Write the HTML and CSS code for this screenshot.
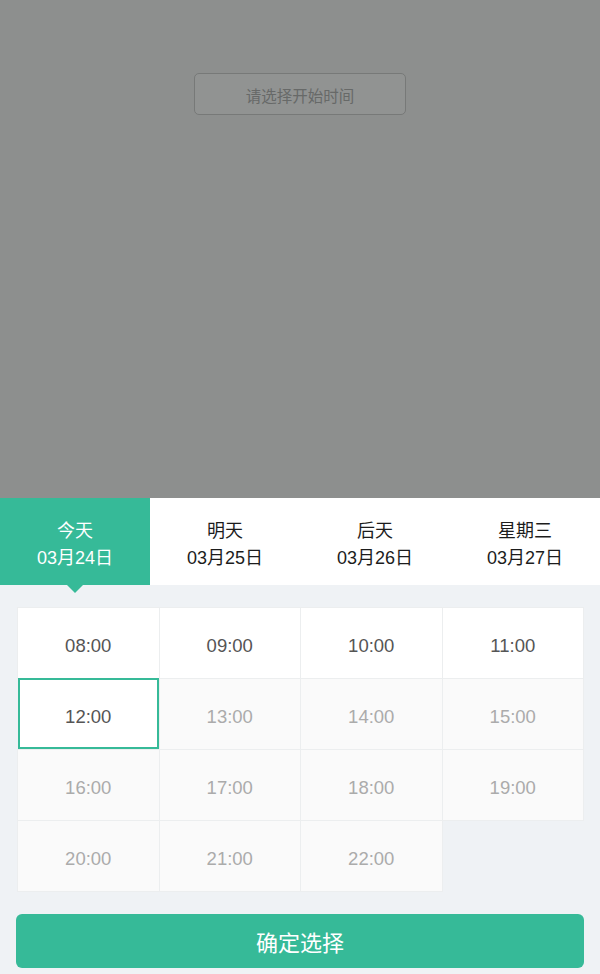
FILE: index.html
```html
<!DOCTYPE html>
<html lang="zh">
<head>
<meta charset="utf-8">
<title>选择时间</title>
<link rel="stylesheet" href="styles.css">
</head>
<body>
<div class="page">
  <div class="mask">
    <div class="start-btn">请选择开始时间</div>
  </div>
  <div class="sheet">
    <div class="tabs">
      <div class="tab active"><span class="t1">今天</span><span class="t2">03月24日</span></div>
      <div class="tab"><span class="t1">明天</span><span class="t2">03月25日</span></div>
      <div class="tab"><span class="t1">后天</span><span class="t2">03月26日</span></div>
      <div class="tab"><span class="t1">星期三</span><span class="t2">03月27日</span></div>
    </div>
    <div class="body">
      <div class="grid">
        <div class="cell">08:00</div>
        <div class="cell">09:00</div>
        <div class="cell">10:00</div>
        <div class="cell">11:00</div>
        <div class="cell selected">12:00</div>
        <div class="cell off">13:00</div>
        <div class="cell off">14:00</div>
        <div class="cell off">15:00</div>
        <div class="cell off">16:00</div>
        <div class="cell off">17:00</div>
        <div class="cell off">18:00</div>
        <div class="cell off">19:00</div>
        <div class="cell off">20:00</div>
        <div class="cell off">21:00</div>
        <div class="cell off">22:00</div>
      </div>
      <div class="confirm">确定选择</div>
    </div>
  </div>
</div>
</body>
</html>
```
FILE: styles.css
```css
html, body {
  margin: 0;
  padding: 0;
}
body {
  font-family: "Liberation Sans", "Noto Sans CJK SC", sans-serif;
  background: #eff2f5;
}
.page {
  width: 600px;
  height: 974px;
  display: flex;
  flex-direction: column;
  overflow: hidden;
}
.mask {
  height: 498px;
  background: #8d8f8e;
  display: flex;
  justify-content: center;
  padding-top: 73px;
  box-sizing: border-box;
}
.start-btn {
  width: 212px;
  height: 42px;
  box-sizing: border-box;
  border: 1px solid #777978;
  border-radius: 5px;
  background: #919392;
  color: #676968;
  font-size: 15.5px;
  padding-top: 2px;
  display: flex;
  align-items: center;
  justify-content: center;
}
.sheet {
  flex: 1;
  display: flex;
  flex-direction: column;
  background: #eff2f5;
}
.tabs {
  height: 87px;
  display: flex;
  background: #fff;
}
.tab {
  flex: 1;
  display: flex;
  flex-direction: column;
  align-items: center;
  justify-content: center;
  padding-top: 6px;
  box-sizing: border-box;
  color: #1c1c1c;
  font-size: 18px;
  line-height: 27px;
  position: relative;
}
.tab.active {
  background: #36ba98;
  color: #fff;
}
.tab.active::after {
  content: "";
  position: absolute;
  left: 50%;
  bottom: -8px;
  margin-left: -8px;
  border-left: 8px solid transparent;
  border-right: 8px solid transparent;
  border-top: 8px solid #36ba98;
}
.body {
  padding: 23px 17px 0 18px;
  display: flex;
  flex-direction: column;
}
.grid {
  display: grid;
  grid-template-columns: repeat(4, 1fr);
  grid-auto-rows: 70px;
  gap: 1px;
}
.cell {
  background: #fff;
  color: #555;
  font-size: 18.5px;
  padding-top: 6px;
  box-sizing: border-box;
  display: flex;
  align-items: center;
  justify-content: center;
  box-shadow: 0 0 0 1px #eceeef;
}
.cell.off {
  background: #fafafa;
  color: #ababab;
}
.cell.selected {
  box-shadow: none;
  border: 2.5px solid #36ba98;
  margin: -1px 0 0 0;
  height: 71px;
  position: relative;
}
.confirm {
  margin: 23px -1px 0 -2px;
  height: 54px;
  border-radius: 6px;
  background: #36ba98;
  color: #fff;
  font-size: 22px;
  display: flex;
  align-items: center;
  justify-content: center;
}
```
